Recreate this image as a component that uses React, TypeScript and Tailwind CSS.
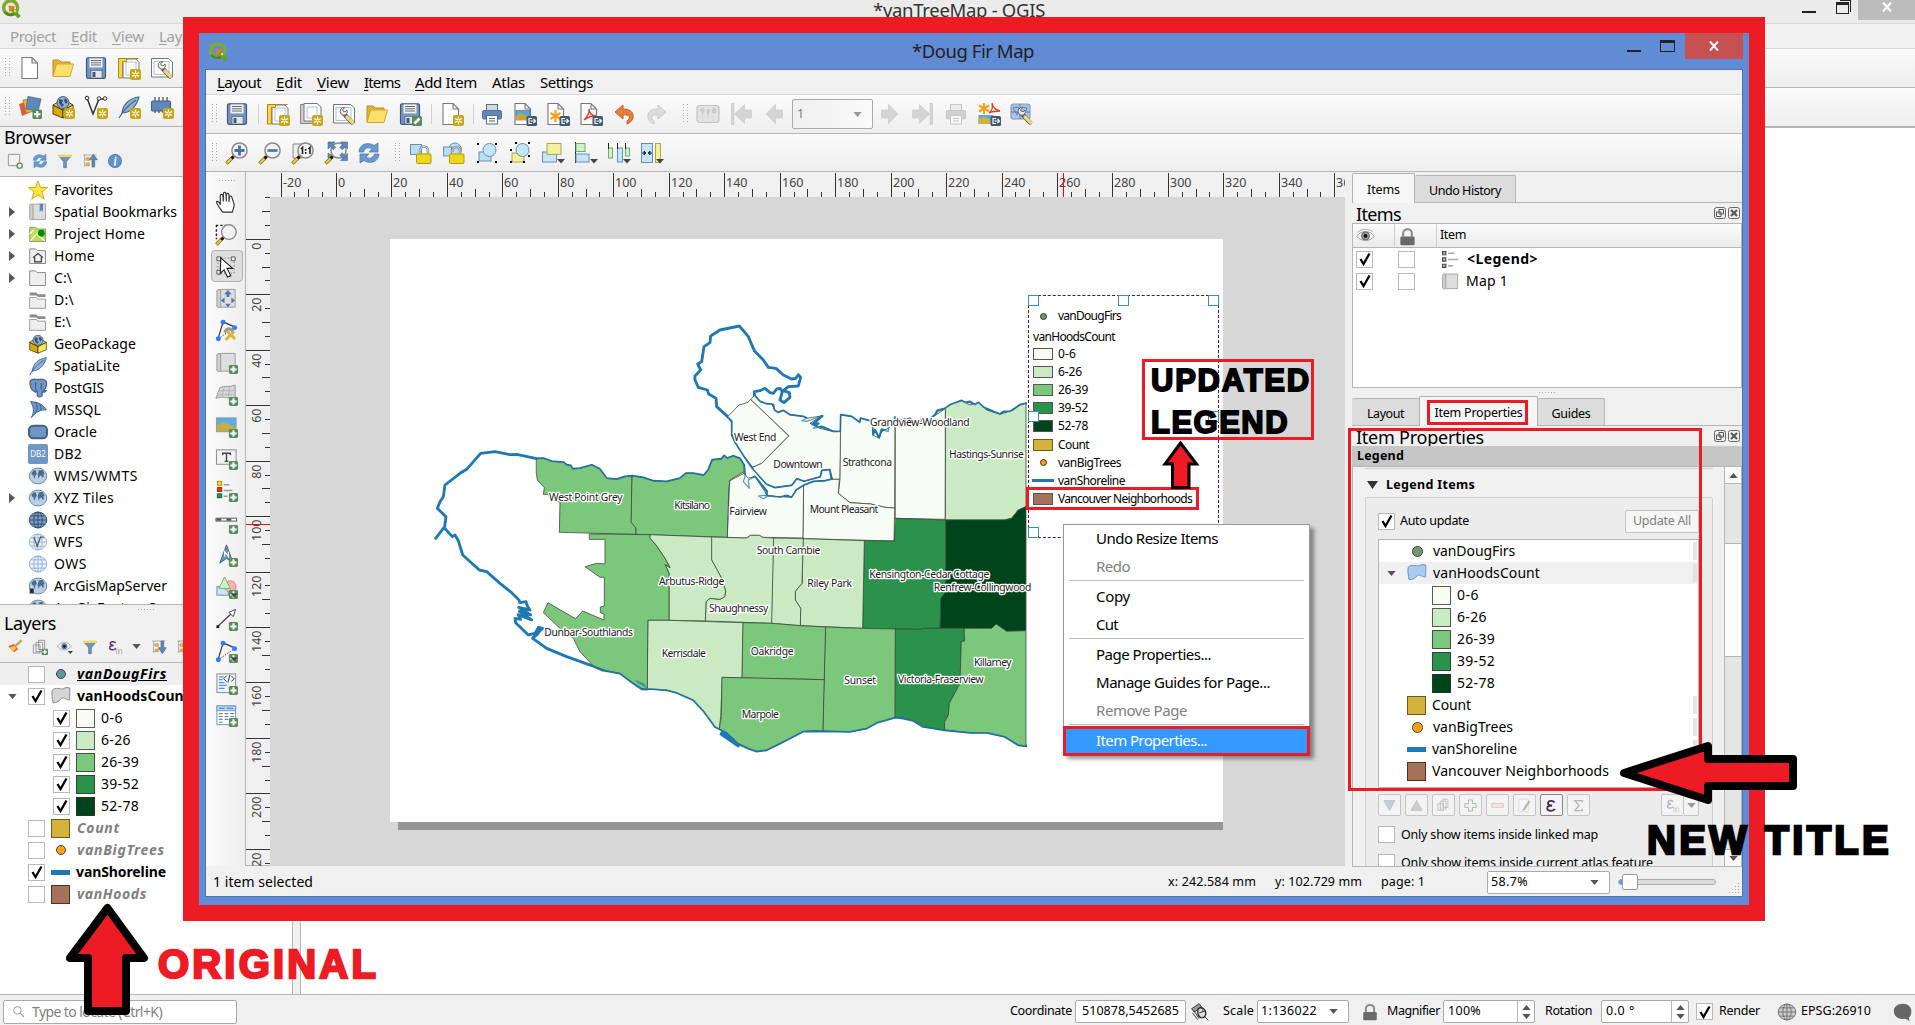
import React, { useLayoutEffect, useRef } from "react";
import type { ReactNode } from "react";

/* Text fitted to a given width by letter spacing */
function T({ w, c = "", children }: { w: number; c?: string; children: ReactNode }) {
  const ref = useRef<HTMLSpanElement>(null);
  useLayoutEffect(() => {
    const el = ref.current;
    if (!el) return;
    el.style.letterSpacing = "0px";
    const natural = el.getBoundingClientRect().width;
    const n = (el.textContent || "").length;
    if (n) el.style.letterSpacing = `${(w - natural) / n}px`;
  }, [w, children]);
  return (
    <span ref={ref} className={"inline-block shrink-0 whitespace-pre " + c}>
      {children}
    </span>
  );
}

/* ---------- badges ---------- */
const Star = () => (
  <g>
    <rect x="13" y="13" width="11" height="11" rx="2" fill="#c8a614" />
    <path d="M18.500 14.500v8M15 16.500l7 4M22 16.500l-7 4" stroke="#fff" strokeWidth="1.300" />
    <circle cx="18.500" cy="18.500" r="1" fill="#c8a614" />
  </g>
);
const Plus = () => (
  <g>
    <rect x="14.500" y="14.500" width="9.500" height="9.500" rx="1.500" fill="#5a8c5a" />
    <path d="M19.250 16v6.500M16 19.250h6.500" stroke="#fff" strokeWidth="2" />
  </g>
);
const Exp = () => (
  <g>
    <rect x="13.500" y="14" width="10.500" height="10" rx="1.500" fill="#415a75" />
    <path d="M19 16.500h-3v5h3M17.500 19h4.500M20.500 17l2 2-2 2" stroke="#fff" strokeWidth="1.200" fill="none" />
  </g>
);
const Page = ({ x = 4 }: { x?: number }) => (
  <path d={`M${x} 1.500h10l5.500 5.500v15.500H${x}zM${x + 10} 1.500v5.500h5.500`} fill="#fff" stroke="#777" strokeWidth="1.100" />
);
const DownTri = () => <path d="M16 18h8l-4 4.500z" fill="#444" />;
const Brush = () => (
  <g>
    <path d="M13 13l7 7.500" stroke="#555" strokeWidth="4.400" strokeLinecap="round" />
    <path d="M15 15l5.500 5.500" stroke="#f0d878" strokeWidth="3.200" strokeLinecap="round" />
    <path d="M8.500 7.500a4 4 0 0 0 5 5.500 4 4 0 0 0 1.500-5l-2 1.800-1.800-.6-.4-1.800 2-1.700a4 4 0 0 0-4.300 1.800z" fill="#ececec" stroke="#666" strokeWidth="1" />
  </g>
);
const Floppy = () => (
  <g>
    <rect x="2.500" y="1.800" width="19" height="20.500" rx="1.500" fill="#6f96c4" stroke="#44597a" strokeWidth="1.200" />
    <rect x="5.500" y="2.400" width="13" height="9" fill="#f4f4f4" />
    <path d="M7 4.500h10M7 6.800h10M7 9h10" stroke="#666" strokeWidth="1" />
    <rect x="7" y="14.500" width="11" height="7.500" fill="#e6e6e6" stroke="#44597a" strokeWidth=".6" />
    <rect x="8.500" y="16" width="3" height="5" fill="#44597a" />
  </g>
);
const Mag = ({ s }: { s?: string }) => (
  <g>
    <path d="M1.500 22.500l6.500-6.500" stroke="#8a6a10" strokeWidth="3.600" />
    <path d="M2 22l5-5" stroke="#f2c84b" strokeWidth="2" />
    <path d="M6.500 17.500l3-3" stroke="#111" strokeWidth="2.600" />
    <circle cx="14.500" cy="9.500" r="7.600" fill="#f1f1f1" fillOpacity=".92" stroke="#8b8b8b" strokeWidth="1.500" />
    {s === "+" && <path d="M14.500 4.500v10M9.500 9.500h10" stroke="#47719f" strokeWidth="2.800" />}
    {s === "-" && <path d="M9.500 9.500h10" stroke="#47719f" strokeWidth="2.600" />}
  </g>
);
const Globe = ({ c = "#5c83ad", f = "#cfe0f2" }: { c?: string; f?: string }) => (
  <g fill="none" stroke={c} strokeWidth="1.200">
    <ellipse cx="12" cy="12" rx="10.500" ry="9.500" fill={f} />
    <ellipse cx="12" cy="12" rx="5" ry="9.500" />
    <path d="M2 12h20M3.500 7h17M3.500 17h17M12 2.500v19" />
  </g>
);
const World = () => (
  <g>
    <ellipse cx="12" cy="12" rx="10.500" ry="9.500" fill="#b9cfe6" stroke="#6b8bb0" strokeWidth="1.200" />
    <path d="M4 8l3-3 3 .5-.5 2 1.500 1.500-2 2-1 4.500-1.500-4-2-1.500zM13 5.500l4-1 3 4.500-1.500 1.500.5 2.500-1.500 1.500-1.500-3-2 .5-1 3.500-1.500-5z" fill="#4b6a8c" />
  </g>
);
const Lock = ({ open }: { open?: boolean }) => (
  <g>
    {open ? <circle cx="13" cy="8.500" r="6.500" fill="#b9dff5" stroke="#6a8eb0" /> : <rect x="1.500" y="3.500" width="11" height="10" fill="#b9dff5" stroke="#6a8eb0" />}
    {open && <rect x="1.500" y="6" width="8" height="9" fill="#b9dff5" stroke="#6a8eb0" />}
    <path d={open ? "M10 11c0-6 8-7 8-1v4" : "M11 14v-4c0-6 8-6 8 0v4"} stroke="#888" strokeWidth="2.600" fill="none" />
    <path d={open ? "M10 11c0-6 8-7 8-1v4" : "M11 14v-4c0-6 8-6 8 0v4"} stroke="#ddd" strokeWidth="1" fill="none" />
    <rect x="7.500" y="13" width="14.500" height="9.500" rx="1" fill="#ecd81e" stroke="#b99b00" />
  </g>
);
const Funnel = () => (
  <g>
    <path d="M2.500 4h19l-7.500 9v9h-4v-9z" fill="#6f96c4" stroke="#4c6c92" />
    <path d="M2.500 2.500h19v3.500h-19z" fill="#f3d94f" />
  </g>
);
const Refresh = () => (
  <g fill="#6b99cf" stroke="#4a7db8" strokeWidth=".8">
    <path d="M2 11C2 4 10 0 17 4.500L21 2v9h-9l3-3C11 5.500 8 7 6.500 11z" />
    <path d="M22 13c0 7-8 11-15 6.500L3 22v-9h9l-3 3c4 2.500 7 1 8.500-3z" />
  </g>
);
const Tree = ({ down }: { down?: boolean }) => (
  <g>
    <path d="M2 3h20M4 3v18M4 9h5M4 18h5" stroke="#888" fill="none" />
    <path d="M7 7h4v4H7zM7 15h4v4H7z" fill="#f9b54c" stroke="#d98a1b" />
    <path d={down ? "M15 3h4v10h4l-6 9-6-9h4z" : "M15 21h4V10h4l-6-8-6 8h4z"} fill="#5e88b8" stroke="#47698f" />
  </g>
);
const Nodes = () => (
  <g>
    <path d="M3 21L8.500 3 21 8.500" stroke="#333" strokeWidth="1.200" fill="none" />
    <path d="M3 21L21 8.500" stroke="#333" strokeDasharray="1.500 1.500" />
    <circle cx="3.500" cy="20.500" r="2.600" fill="#2a7fff" />
    <circle cx="8.500" cy="3.500" r="2.600" fill="#2a7fff" />
    <circle cx="20.500" cy="9" r="2.600" fill="#2a7fff" />
  </g>
);
const Printer = ({ g }: { g?: boolean }) => (
  <g stroke={g ? "#c6c6c6" : "#5a6f88"} strokeWidth="1">
    <rect x="6.500" y="2.500" width="11" height="7" fill={g ? "#ececec" : "#d5d8da"} />
    <rect x="2.500" y="8.500" width="19" height="8.500" rx="1.500" fill={g ? "#d2d2d2" : "#5f88b9"} />
    <rect x="6.500" y="13.500" width="11" height="8.500" fill="#f8f8f8" />
    <path d="M9 16.500h6M9 19h6" />
  </g>
);
const ArrowG = ({ flip, bar }: { flip?: boolean; bar?: boolean }) => (
  <g transform={flip ? "matrix(-1 0 0 1 24 0)" : undefined} fill="#d3d4d5" stroke="#c6c8ca" strokeWidth=".6">
    <path d={bar ? "M1.500 8h7V2.500L18.500 12 8.500 21.500V16h-7z" : "M3.500 8h7V2.500L20 12l-9.500 9.500V16h-7z"} />
    {bar && <rect x="19" y="1.500" width="2.600" height="21" />}
  </g>
);
const Feather = () => (
  <g>
    <path d="M22 2C13 3 6 9 5 18c7 0 14-5 17-16z" fill="#8fb2d6" stroke="#44678f" strokeWidth="1.100" />
    <path d="M2 23C6 16 11 10 19 5" stroke="#44678f" strokeWidth="1.200" fill="none" />
  </g>
);
const Box = () => (
  <g>
    <path d="M2 10l10 5v8L2 19z" fill="#d7ab00" stroke="#222" strokeWidth=".8" />
    <path d="M22 10l-10 5v8l10-4z" fill="#fbe95b" stroke="#222" strokeWidth=".8" />
    <path d="M2 10l5-3h10l5 3-10 5z" fill="#e5c83b" stroke="#222" strokeWidth=".8" />
    <circle cx="12" cy="7.500" r="6" fill="#8fb0d2" stroke="#38516f" strokeWidth=".9" />
    <path d="M8 4l4 1-1 3 2 2-2 2-3-4zM14 3l3 3-2 3-2-3z" fill="#38516f" />
  </g>
);
const Folder = () => (
  <path d="M2 3.500h7l2 2h10V21H2z" fill="#efefef" stroke="#8c8c8c" strokeWidth="1.200" />
);
const MapBook = () => (
  <g>
    <path d="M5.500 2.500h15.500v18.500H5.500z" fill="#dedede" stroke="#999" />
    <path d="M2 4c0-2 4-2 4 0v17c-2 1-4 0-4-1z" fill="#cfcfcf" stroke="#999" />
  </g>
);
const Poly = ({ c = "#d5d5d5", s = "#888" }: { c?: string; s?: string }) => (
  <path d="M1.500 5c4-4 9-1 13-1.500 3-2 5-2 8-1 .5 4-.5 9 0 14-4 1.500-6-4-10-1.500-3 3-6 5.500-10 5C1.500 15 .500 10 1.500 5z" fill={c} stroke={s} strokeWidth="1.200" />
);
const Eps = ({ c = "#5b3a63" }: { c?: string }) => (
  <path d="M13 6c-2-3-8-2.500-8 .8 0 2 2 2.800 5 2.800-4 0-6 1-6 3.500 0 3.800 7 4 9.500.8" fill="none" stroke={c} strokeWidth="2.200" />
);

const ICONS: Record<string, ReactNode> = {
  newfile: <Page x={4} />,
  open: (
    <g>
      <path d="M2 20V4h6l2 2h9v3" fill="#e2b33a" stroke="#b98d1b" />
      <path d="M2 20.500L5.500 8h17L19 20.500z" fill="#fddf6b" stroke="#d2a630" />
    </g>
  ),
  save: <Floppy />,
  newlayout: (
    <g>
      <path d="M6 3h13l3 3.500V22H6z" fill="#fff" stroke="#777" />
      <path d="M9 6h10v13H9z" fill="#fff" stroke="#a8c2e8" />
      <path d="M1.500 2.500h20M1.500 2.500h8v3h-4V22h-4z" fill="#f6d44f" stroke="#a88a1a" strokeWidth="1" />
      <Star />
    </g>
  ),
  duplayout: (
    <g>
      <path d="M1.500 2.500h16v19h-16z" fill="#ccc" stroke="#888" />
      <path d="M5 1.500h13l4 3.500v14H5z" fill="#fff" stroke="#777" />
      <path d="M8 5h10v11H8z" fill="#fff" stroke="#a8c2e8" />
      <Star />
    </g>
  ),
  manager: (
    <g>
      <path d="M1.500 2.500h17l4 3.500v15h-21z" fill="#fff" stroke="#777" />
      <path d="M4 5.500h15v13H4z" fill="#fff" stroke="#a8c2e8" />
      <Brush />
    </g>
  ),
  savetpl: (
    <g>
      <Floppy />
      <rect x="14" y="14" width="10" height="10" rx="1.500" fill="#5a8c5a" />
      <path d="M16.500 21.500l5-5" stroke="#fff" strokeWidth="2.600" />
    </g>
  ),
  addpage: (
    <g>
      <Page x={3} />
      <Star />
    </g>
  ),
  print: <Printer />,
  printg: <Printer g />,
  expimg: (
    <g>
      <Page x={2} />
      <rect x="3" y="8.500" width="14" height="9.500" fill="#4fa6e8" stroke="#666" strokeWidth=".6" />
      <path d="M3 18v-4l5-3 9 4v3z" fill="#c7a638" />
      <Exp />
    </g>
  ),
  expsvg: (
    <g>
      <Page x={2} />
      <path d="M9.500 8v12M4.500 11l10 6M14.500 11L4.500 17" stroke="#f9a01b" strokeWidth="2.200" />
      <Exp />
    </g>
  ),
  exppdf: (
    <g>
      <Page x={2} />
      <path d="M5 18c3-2 6-8 5-11 0 4 3 7 7 7-4-.5-8 1-12 4z" fill="none" stroke="#e33b2e" strokeWidth="1.500" />
      <Exp />
    </g>
  ),
  undo: <path d="M3 10l8-7v4c8 0 11 4 10 9-1 3-3 5-6 6v-3c4-3 3-7-4-6v4z" fill="#e07e3c" stroke="#c26322" />,
  redo: <path d="M21 10l-8-7v4C5 7 2 11 3 16c1 3 3 5 6 6v-3c-4-3-3-7 4-6v4z" fill="#dcdcdc" stroke="#c9c9c9" />,
  atlas: (
    <g>
      <rect x="1" y="3.500" width="22" height="17" rx="3" fill="#e4e4e4" stroke="#c2c2c2" strokeWidth="1.200" />
      <path d="M3.500 7.500l4-1 1.500 1.500-1.500 2-.5 4-1.500-4zM11 7l3 .5-.5 3-1.500 4-1.500-4zM16 7l4-.5.5 3-2 2.500-2.500-1.500z" fill="#c6c6c6" />
      <path d="M1 9h22M1 15h22M7 4v16M12 4v16M17 4v16" fill="none" stroke="#d4d4d4" strokeWidth=".5" />
    </g>
  ),
  first: <ArrowG flip bar />,
  prev: <ArrowG flip />,
  next: <ArrowG />,
  last: <ArrowG bar />,
  expatlas: (
    <g>
      <path d="M7 1v11M2 3.500l10 6M12 3.500l-10 6" stroke="#f9a01b" strokeWidth="2.200" />
      <path d="M12 11c4-3 4-6 3-10 1 5 3 7 8 8-4 0-7 0-11 2z" fill="none" stroke="#e33b2e" strokeWidth="1.300" />
      <rect x="1.500" y="13" width="15" height="9" fill="#5aa7df" />
      <path d="M1.500 22v-5l6-2 9 4v3z" fill="#d2ae3c" />
      <Exp />
    </g>
  ),
  atlasset: (
    <g>
      <rect x="1" y="2" width="19" height="15" rx="2.500" fill="#a9c3e4" stroke="#7d9fc8" strokeWidth="1.200" />
      <path d="M3 6l5-1 1 3-2 5zM12 5l5 1-2 5M1 10h19M10 2v15" stroke="#4b6f9c" strokeWidth=".8" fill="none" />
      <Brush />
    </g>
  ),
  zoomin: <Mag s="+" />,
  zoomout: <Mag s="-" />,
  zoom11: (
    <g>
      <path d="M2 3h9v14H2z" fill="#eee" stroke="#888" />
      <Mag />
      <path d="M10 8l1.500-1.500v6.500M17.500 8l1.500-1.500v6.500M14.700 8v1.800M14.700 11v1.800" stroke="#222" strokeWidth="1.600" fill="none" />
    </g>
  ),
  zoomfull: (
    <g>
      <Mag />
      <path d="M4 1h7L8.700 3.300l3 3-2.400 2.400-3-3L4 8zM23.500 1h-7l2.300 2.300-3 3 2.400 2.400 3-3L23.500 8zM23.500 19.500h-7l2.300-2.300-3-3 2.400-2.400 3 3 2.300-2.300zM4 12v5l3-3z" fill="#5d88b9" stroke="#47698f" strokeWidth=".6" />
    </g>
  ),
  refresh: <Refresh />,
  lock: <Lock />,
  unlock: <Lock open />,
  group: (
    <g>
      <rect x="4" y="11" width="12" height="9" fill="#b9dff5" stroke="#6a8eb0" />
      <circle cx="14.500" cy="9" r="6.500" fill="#c6e6f8" stroke="#6a8eb0" />
      <path d="M2 2h2v2H2zM20 2h2v2h-2zM2 20h2v2H2zM20 20h2v2h-2z" fill="#000" />
    </g>
  ),
  ungroup: (
    <g>
      <rect x="4" y="12" width="12" height="9" fill="#f3ef9c" stroke="#aca64c" />
      <circle cx="14.500" cy="9" r="6.500" fill="#c6e6f8" stroke="#6a8eb0" />
      <path d="M7 1h2v2H7zM20 1h2v2h-2zM2 8h2v2H2zM2 20h2v2H2zM15 20h2v2h-2zM20 14h2v2h-2z" fill="#000" />
    </g>
  ),
  raise: (
    <g>
      <rect x="1.500" y="11" width="14" height="10" fill="#c6e6f8" stroke="#6a8eb0" />
      <rect x="6" y="2.500" width="14" height="11" fill="#f3ef9c" stroke="#aca64c" />
      <DownTri />
    </g>
  ),
  align: (
    <g>
      <path d="M1.500 1v21" stroke="#222" />
      <rect x="2" y="2.500" width="9" height="8" fill="#c9f5c6" stroke="#7aa874" />
      <rect x="2" y="13" width="13" height="8" fill="#c6e6f8" stroke="#6a8eb0" />
      <DownTri />
    </g>
  ),
  distribute: (
    <g>
      <rect x="1.500" y="7" width="4" height="10" fill="#c9f5c6" stroke="#7aa874" />
      <rect x="10.500" y="7" width="5" height="14" fill="#c6e6f8" stroke="#6a8eb0" />
      <rect x="18.500" y="7" width="4" height="8" fill="#c9f5c6" stroke="#7aa874" />
      <path d="M1.500 2v6M10.500 2v6M18.500 2v6" stroke="#222" />
      <DownTri />
    </g>
  ),
  resize: (
    <g>
      <rect x="1.500" y="2.500" width="11" height="19" fill="#c6e6f8" stroke="#6a8eb0" />
      <path d="M2 12h3M12 12H9M4 10l2 2-2 2zM10 10l-2 2 2 2z" fill="#333" stroke="#333" />
      <rect x="15.500" y="2.500" width="5" height="19" fill="#f3ef9c" stroke="#aca64c" />
      <DownTri />
    </g>
  ),
  dsm: (
    <g>
      <path d="M1 9l9-3 3 11-9 4z" fill="#d95f3b" />
      <path d="M5 5l10-2 2 13-9 2z" fill="#e9b23c" stroke="#a8761e" strokeWidth=".7" />
      <path d="M10 1.500L23 4l-3 12-12-2z" fill="#5f88b9" stroke="#44678f" strokeWidth=".8" />
      <Plus />
    </g>
  ),
  geopkg: <Box />,
  newgeopkg: (
    <g>
      <Box />
      <Star />
    </g>
  ),
  newshp: (
    <g>
      <path d="M3 3l6 16 6-15h6" stroke="#333" strokeWidth="1.500" fill="none" />
      <circle cx="3" cy="3" r="1.800" fill="#fff" stroke="#333" />
      <circle cx="15" cy="3.500" r="1.800" fill="#fff" stroke="#333" />
      <circle cx="21" cy="3.500" r="1.800" fill="#fff" stroke="#333" />
      <Star />
    </g>
  ),
  newspatialite: (
    <g>
      <Feather />
      <Star />
    </g>
  ),
  feather: <Feather />,
  memory: (
    <g>
      <path d="M5 2v4M9 2v4M13 2v4M17 2v4M5 14v4M9 14v4M13 14v4" stroke="#222" />
      <rect x="1.500" y="6" width="19" height="10" rx="1" fill="#5f88b9" stroke="#3d5f88" />
      <Star />
    </g>
  ),
  addlayer: (
    <g>
      <path d="M2 2h17v17H2z" fill="#f2f2f2" stroke="#888" strokeWidth="1.300" />
      <circle cx="19" cy="19" r="3.800" fill="#fff" stroke="#5a8c5a" strokeWidth="2" />
    </g>
  ),
  funnel: <Funnel />,
  treeup: <Tree />,
  treedown: <Tree down />,
  info: (
    <g>
      <circle cx="12" cy="12" r="10" fill="#5f93cf" stroke="#3f6ba3" />
      <path d="M13 5.500v2.600M11 10.500h2l-1.500 7h2" stroke="#fff" strokeWidth="2.300" fill="none" />
    </g>
  ),
  star: <path d="M12 1l3 8h8.500l-6.700 5.300L19.500 23 12 18l-7.500 5 2.700-8.700L.5 9H9z" fill="#fbe63c" stroke="#cda41e" strokeWidth="1.100" />,
  bookmark: (
    <g>
      <MapBook />
      <path d="M14 2h4v10l-2-2-2 2z" fill="#5f88b9" />
    </g>
  ),
  projhome: (
    <g>
      <path d="M2 4h7l2 2h10v15H2z" fill="#b6e04c" stroke="#888" />
      <path d="M2 12l5-5M3 20l7-8 10 8" stroke="#fff" strokeWidth="1.500" fill="none" />
      <circle cx="16" cy="11" r="4" fill="#008a00" />
    </g>
  ),
  home: (
    <g>
      <Folder />
      <path d="M6 14l6-5 6 5M8 13.500v5.500h8v-5.500" stroke="#333" strokeWidth="1.400" fill="none" />
    </g>
  ),
  folder: <Folder />,
  drive: (
    <g>
      <path d="M2 9h8l2 2h9v11H2z" fill="#efefef" stroke="#8c8c8c" />
      <path d="M2 3h8l2 2h9v3.500h-9l-2-2H2z" fill="#8c8c8c" />
    </g>
  ),
  postgis: (
    <path d="M3 3c5-3 8-1 9-1 3-1 8-1 10 2 1 5-1 9-3 11h3c-1 2-4 3-5 1v5c-2 3-6 2-6-1v-4c-3 2-3 0-3 0-4-1-7-8-5-13zM9 5c1 4-1 7 1 10M16 6v8" fill="#6f96c4" stroke="#3f6187" strokeWidth="1.400" />
  ),
  mssql: <path d="M3 2c9 0 16 4 19 10-6-1-12 2-18 9 4-7 3-13-1-19zM9 3c3 5 2 9 0 12M14 5c2 3 2 5 1 7" fill="#6f96c4" stroke="#3f6187" strokeWidth="1.200" />,
  oracle: <rect x="1.200" y="4.500" width="21.600" height="15" rx="5" fill="#6f96c4" stroke="#3f5f85" strokeWidth="2.400" />,
  world: <World />,
  wcs: <Globe c="#33506f" f="#7c9fc6" />,
  wfs: (
    <g>
      <Globe c="#9db9d8" f="#edf3fa" />
      <path d="M7 6l4 11 4-11h4" stroke="#555" strokeWidth="1.500" fill="none" />
    </g>
  ),
  ows: <Globe c="#8fb2da" f="#eef5fc" />,
  arcgis: (
    <g>
      <World />
      <path d="M2 15h5v6H2z" fill="#333" />
    </g>
  ),
  style: (
    <g>
      <path d="M22 2l-9 8" stroke="#caa04a" strokeWidth="3.500" />
      <path d="M2 11l8-4 7 8-6 5z" fill="#e7653a" />
      <path d="M4 13l7-3 3 4-6 5z" fill="#f7c948" />
    </g>
  ),
  addgroup: (
    <g>
      <path d="M2 9h10v12H2zM6 5h10v14H6zM10 2h9v14h-9z" fill="#f0f0f0" stroke="#777" />
      <Plus />
    </g>
  ),
  eye: (
    <g>
      <path d="M1 11c5-8 15-8 20 0-5 7-15 7-20 0z" fill="#f4f4f4" stroke="#888" />
      <circle cx="11" cy="11" r="4.500" fill="#5e7f9f" />
      <circle cx="11" cy="11" r="2" fill="#111" />
      <DownTri />
    </g>
  ),
  eyeh: (
    <g>
      <path d="M1 13c5-8 17-8 22 0-5 7-17 7-22 0z" fill="#f4f4f4" stroke="#888" />
      <path d="M2 8c5-5 13-5 19-1" fill="none" stroke="#999" />
      <circle cx="12" cy="12.500" r="5" fill="#999" stroke="#555" />
      <circle cx="12" cy="12.500" r="2.400" fill="#111" />
    </g>
  ),
  eps: (
    <g>
      <Eps />
      <path d="M14 23v-7h3v7M18 23v-7h4v7" stroke="#aaa" fill="none" />
    </g>
  ),
  epsg: (
    <g opacity=".35">
      <Eps />
      <path d="M14 23v-7h3v7M18 23v-7h4v7" stroke="#777" fill="none" />
    </g>
  ),
  epsb: (
    <g transform="translate(0 -.5) scale(1.300)">
      <Eps c="#4b2a55" />
    </g>
  ),
  polyg: <Poly />,
  polyb: <Poly c="#a9cbee" s="#6d93ba" />,
  hand: (
    <path d="M8 22c-2-3-6-7-6.500-11 1.500-1 3 1 4 3.500V5c0-2 2.500-2 2.700 0l.5 6V3c0-2 2.600-2 2.800 0l.3 8V4c.3-2 2.700-2 2.800 0v7.500l.4-5c.3-2 2.600-1.500 2.600.3L20 14c0 3-1 5-2 8z" fill="#fff" stroke="#333" strokeWidth="1.200" />
  ),
  zoombox: (
    <g>
      <path d="M1 2.500h11M1.500 2v15" stroke="#222" strokeWidth="1.500" strokeDasharray="2.500 2" />
      <Mag />
    </g>
  ),
  select: (
    <g>
      <rect x="3" y="3" width="17" height="16" fill="none" stroke="#777" strokeDasharray="1.500 2" />
      <path d="M2 2h4v4H2zM17 2h4v4h-4zM2 16h4v4H2z" fill="#eee" stroke="#555" />
      <path d="M6 3l12.500 11h-6l4 7.500-3.500 1.500-3.500-7.500-4 3.500z" fill="#fff" stroke="#222" strokeWidth="1.200" />
    </g>
  ),
  move: (
    <g>
      <MapBook />
      <path d="M13.500 3l4 4.500h-2.500v3h-3v-3H9.500zM6 14l4-3v6zM21 14l-4-3v6zM13.500 21l-3-3.500h6z" fill="#5077a5" />
    </g>
  ),
  editnodes: (
    <g>
      <Nodes />
      <path d="M12 12l9 9M20 13l-9 9" stroke="#e2b33a" strokeWidth="3" />
      <path d="M10 14c2-5 6-5 9-1" stroke="#999" strokeWidth="3" fill="none" />
    </g>
  ),
  addmap: (
    <g>
      <MapBook />
      <Plus />
    </g>
  ),
  add3d: (
    <g>
      <path d="M5 5c5-3 10 0 16-3v13c-6 2-12-2-20 1z" fill="#d8d8d8" stroke="#999" />
      <path d="M4 9c6-3 11 1 17-2M3 13c6-3 12 1 18-2M10 3L7 15M15 4l-1 12" fill="none" stroke="#aaa" strokeWidth=".8" />
      <Plus />
    </g>
  ),
  addpic: (
    <g>
      <rect x="1.500" y="3" width="20.500" height="14.500" fill="#5ab0ee" stroke="#999" />
      <path d="M2 17v-6l7-4 13 6v4z" fill="#c9ab43" />
      <Plus />
    </g>
  ),
  addlabel: (
    <g>
      <rect x="1.500" y="3" width="20.500" height="15" fill="#f2f2f2" stroke="#888" />
      <path d="M8 8.500V6.500h8v2M12 6.500v8M10 15h4" stroke="#444" strokeWidth="1.400" fill="none" />
      <Plus />
    </g>
  ),
  addlegend: (
    <g>
      <path d="M9 6h6M9 12h9M9 18h4" stroke="#999" strokeWidth="1.500" />
      <rect x="2.500" y="2.500" width="4.500" height="4" fill="#ffd21e" stroke="#c48b00" />
      <rect x="2.500" y="9" width="4.500" height="4" fill="#f23c0c" stroke="#a32400" />
      <rect x="2.500" y="15.500" width="4.500" height="4" fill="#13a05a" stroke="#06683a" />
      <Plus />
    </g>
  ),
  addscale: (
    <g>
      <rect x="1" y="7.500" width="21.500" height="3" fill="#fff" stroke="#555" />
      <path d="M1.500 9h5M12 9h5" stroke="#555" strokeWidth="2.500" />
      <Plus />
    </g>
  ),
  north: (
    <g>
      <path d="M12 1l7 19-7-5-7 5z" fill="#6f96c4" stroke="#44597a" />
      <path d="M10 13V8l4 5V8" stroke="#fff" strokeWidth="1.200" fill="none" />
      <Plus />
    </g>
  ),
  addshape: (
    <g>
      <rect x="2" y="11" width="12" height="9" fill="#c6e6f8" stroke="#6a8eb0" />
      <circle cx="16" cy="11" r="6" fill="#f6b3b3" stroke="#cf8585" />
      <path d="M10 1l6 12H4z" fill="#c9f5c6" stroke="#7aa874" />
      <Plus />
      <DownTri />
    </g>
  ),
  addarrow: (
    <g>
      <path d="M3 19L18 5" stroke="#444" strokeWidth="1.300" />
      <path d="M21.500 1.500l-7 3 4.500 4.500z" fill="#fff" stroke="#444" />
      <path d="M1.500 18h3v3h-3z" fill="#222" />
      <Plus />
    </g>
  ),
  addnode: (
    <g>
      <Nodes />
      <Plus />
      <DownTri />
    </g>
  ),
  addhtml: (
    <g>
      <rect x="2" y="2" width="19.500" height="19.500" fill="#eef3f8" stroke="#888" />
      <path d="M4 5h5M4 8h4M4 11h6M4 14h8M4 17h6" stroke="#5f93cf" strokeWidth="1.300" />
      <path d="M12 4l-3 3 3 3M17 4l3 3-3 3M15.500 3l-2 8" stroke="#333" fill="none" />
      <Plus />
    </g>
  ),
  addtable: (
    <g>
      <rect x="2" y="2" width="19.500" height="19.500" fill="#fff" stroke="#6f96c4" />
      <path d="M2 2h19.500v5H2z" fill="#bcdcf2" stroke="#6f96c4" />
      <path d="M4 4.500h6M12 4.500h7M4 10h4M10 10h4M16 10h4M4 13h4M10 13h4M16 13h4M4 16h4M10 16h4M4 19h4" stroke="#5f88b9" strokeWidth="1.200" />
      <Plus />
    </g>
  ),
  lockg: (
    <g>
      <path d="M6.500 12V8c0-7 11-7 11 0v4" stroke="#8a8a8a" strokeWidth="2.600" fill="none" />
      <rect x="3" y="12" width="18" height="11" rx="1.500" fill="#6a6a6a" />
    </g>
  ),
  legendicon: (
    <g>
      <path d="M9 4h8M9 12h13M9 20h6" stroke="#aaa" strokeWidth="2" />
      <path d="M2 2h4v4H2zM2 10h4v4H2zM2 18h4v4H2z" fill="#ccc" stroke="#444" strokeWidth="1.500" />
    </g>
  ),
  mapbook: <MapBook />,
  mouse: (
    <g>
      <path d="M2 8l9-6 3 4-9 6z" fill="#999" stroke="#222" />
      <path d="M10 8c4-3 9 1 9 5s-2 6-5 6-6-5-4-11z" fill="#ddd" stroke="#222" strokeWidth="1.500" />
      <path d="M3 13l6 8M5 11l6 9M11 13l7-2M15 9l1 3M18 18l4 4" stroke="#222" />
    </g>
  ),
  crs: <Globe c="#777" f="#ccc" />,
  bubble: <path d="M12 2c6 0 10 4 10 9s-2 7-3 8l1 4-5-3c-8 2-14-3-14-9 0-5 4-9 11-9z" fill="#666" />,
  search: (
    <g>
      <circle cx="10" cy="10" r="7" fill="none" stroke="#999" strokeWidth="1.800" />
      <path d="M15 15l7 7" stroke="#999" strokeWidth="2" />
    </g>
  ),
  bdown: <path d="M3 4h18l-9 16z" fill="#c5cdd6" stroke="#b2b8bf" />,
  bup: <path d="M3 20h18L12 4z" fill="#cdcdcd" stroke="#b5b5b5" />,
  bgroup: <path d="M3 9h9v11H3zM7 5h9v13H7zM11 2h8v13h-8z" fill="#f0f0f0" stroke="#bbb" strokeWidth="1.300" />,
  bplus: <path d="M9 3h6v6h6v6h-6v6H9v-6H3V9h6z" fill="#f4f4f4" stroke="#a8b5a8" strokeWidth="1.500" />,
  bminus: <path d="M3 9h18v6H3z" fill="#f6e9ea" stroke="#d8bcbc" strokeWidth="1.300" />,
  bedit: (
    <g>
      <path d="M3 2h15v20H3z" fill="#f8f8f8" stroke="#ccc" />
      <path d="M20 5L10 20" stroke="#b8b8ae" strokeWidth="3.500" />
    </g>
  ),
  bsum: <path d="M18 7V4H6l7 8-7 8h12v-3" fill="none" stroke="#b5b5b5" strokeWidth="2" />,
  qgis: (
    <g>
      <circle cx="11" cy="11" r="8" fill="none" stroke="#7cab2d" strokeWidth="4" />
      <path d="M4 16a8.500 8.500 0 0 0 11 2" fill="none" stroke="#4f8a1f" strokeWidth="3" />
      <path d="M12 12l9 10" stroke="#64a02b" strokeWidth="4.500" />
      <path d="M10 10l4 .5-3.500 3.500z" fill="#ef7b1c" stroke="#ef7b1c" strokeWidth="2.500" />
      <path d="M15 14l2 2" stroke="#f7e03c" strokeWidth="2.500" />
    </g>
  ),
};

function I({ n, c = "size-6" }: { n: string; c?: string }) {
  return (
    <svg viewBox="0 0 24 24" className={"block shrink-0 " + c}>
      {ICONS[n]}
    </svg>
  );
}

/* ---------- small controls ---------- */
const Grip = () => (
  <div className="grid h-[20px] w-[5px] shrink-0 grid-cols-2 gap-x-[2px]">
    {Array.from({ length: 14 }, (_, i) => (
      <div key={i} className="size-px bg-[#aaa]" />
    ))}
  </div>
);
const HGrip = () => (
  <div className="flex gap-[2px]">
    {Array.from({ length: 6 }, (_, i) => (
      <div key={i} className="size-px bg-[#aaa]" />
    ))}
  </div>
);
const Sep = () => <div className="-mr-px h-[20px] w-px shrink-0 bg-[#d0d0d0]" />;
function Check({ on }: { on?: boolean }) {
  return (
    <div className="flex size-[17px] shrink-0 items-center justify-center border border-[#b8b8b8] bg-white">
      {on && (
        <svg viewBox="0 0 12 14" className="h-[14px] w-[12px]">
          <path d="M1.500 7l3 5L10.500 1.500" fill="none" stroke="#000" strokeWidth="2.300" />
        </svg>
      )}
    </div>
  );
}
const Down = ({ c = "text-[#555]" }: { c?: string }) => (
  <svg viewBox="0 0 10 6" className={"h-[5px] w-[9px] shrink-0 " + c}>
    <path d="M0 0h10L5 6z" fill="currentColor" />
  </svg>
);
const Up = () => (
  <svg viewBox="0 0 10 6" className="h-[5px] w-[9px] shrink-0 text-[#555]">
    <path d="M0 6h10L5 0z" fill="currentColor" />
  </svg>
);
const Right = () => (
  <svg viewBox="0 0 6 10" className="h-[10px] w-[6px] shrink-0">
    <path d="M0 0v10L6 5z" fill="#555" />
  </svg>
);
const WX = () => (
  <svg viewBox="0 0 10 10" className="size-[10px]">
    <path d="M1 .5l8 9M9 .5l-8 9" stroke="#fff" strokeWidth="2" />
  </svg>
);
const Menu = ({ w, t }: { w: number; t: string }) => (
  <T w={w}>
    <span className="underline underline-offset-2">{t[0]}</span>
    {t.slice(1)}
  </T>
);
const SWATCHES: [string, string, number, number][] = [
  ["0-6", "bg-[#f7fcf5]", 22, 18],
  ["6-26", "bg-[#c9eac3]", 30, 24],
  ["26-39", "bg-[#7bc77c]", 38, 30],
  ["39-52", "bg-[#2a924a]", 38, 30],
  ["52-78", "bg-[#00441b]", 38, 30],
];
const BAR = "flex shrink-0 items-center bg-linear-to-b from-[#fbfbfb] to-[#eeeeee] border-b border-[#b5b5b5]";

/* ---------- main window left docks ---------- */
const TREE: [string, string, number, boolean][] = [
  ["star", "Favorites", 59, false],
  ["bookmark", "Spatial Bookmarks", 123, true],
  ["projhome", "Project Home", 91, true],
  ["home", "Home", 41, true],
  ["folder", "C:\\", 18, true],
  ["drive", "D:\\", 20, false],
  ["drive", "E:\\", 17, false],
  ["geopkg", "GeoPackage", 82, false],
  ["feather", "SpatiaLite", 66, false],
  ["postgis", "PostGIS", 50, false],
  ["mssql", "MSSQL", 47, false],
  ["oracle", "Oracle", 43, false],
  ["db2", "DB2", 28, false],
  ["world", "WMS/WMTS", 84, false],
  ["world", "XYZ Tiles", 60, true],
  ["wcs", "WCS", 31, false],
  ["wfs", "WFS", 29, false],
  ["ows", "OWS", 33, false],
  ["arcgis", "ArcGisMapServer", 113, false],
  ["world", "ArcGisFeatureServer", 138, false],
];

function LeftDock() {
  return (
    <div className="flex w-[293px] shrink-0 flex-col border-r border-[#b5b5b5]">
      <div className="flex h-[21px] shrink-0 items-center pb-[2px] pl-1 text-[18px] leading-none">
        <T w={67}>Browser</T>
      </div>
      <div className="flex h-[29px] shrink-0 items-center gap-[9px] border-b border-[#b5b5b5] pb-[2px] pl-[7px]">
        {["addlayer", "refresh", "funnel", "treeup", "info"].map((n) => (
          <I key={n} n={n} c="size-4" />
        ))}
      </div>
      <div className="h-[428px] shrink-0 overflow-hidden border-b border-[#b5b5b5] bg-white pt-[2px]">
        {TREE.map(([ic, t, w, ar], i) => (
          <div key={i} className="flex h-[22px] items-center">
            <div className="flex w-[27px] shrink-0 justify-center pr-[3px]">{ar && <Right />}</div>
            {ic === "db2" ? (
              <div className="ml-px flex size-[20px] items-center justify-center rounded-xs bg-[#6f96c4] text-[8px] text-white">DB2</div>
            ) : (
              <I n={ic} c="size-5 ml-px" />
            )}
            <T w={w} c="ml-[6px]">
              {t}
            </T>
          </div>
        ))}
      </div>
      <div className="flex h-[8px] shrink-0 items-center justify-center">
        <HGrip />
      </div>
      <div className="flex h-[20px] shrink-0 items-center pb-px pl-1 text-[18px] leading-none">
        <T w={52}>Layers</T>
      </div>
      <div className="flex h-[30px] shrink-0 items-center gap-[9px] border-b border-[#b5b5b5] pb-[2px] pl-[7px]">
        {["style", "addgroup", "eye", "funnel", "eps"].map((n) => (
          <I key={n} n={n} c="size-4" />
        ))}
        <Down />
        <I n="treedown" c="size-4 ml-px" />
        <I n="treeup" c="size-4" />
      </div>
      <div className="flex-1 overflow-hidden bg-white">
        <div className="flex h-[22px] items-center bg-[#efefef] pl-[28px]">
          <Check />
          <div className="ml-[11px] size-[10px] rounded-full border border-[#444] bg-[#5b9a9a]" />
          <T w={90} c="ml-[11px] font-bold italic underline">
            vanDougFirs
          </T>
        </div>
        <div className="flex h-[22px] items-center pl-[8px]">
          <Down />
          <div className="w-[11px]" />
          <Check on />
          <I n="polyg" c="size-5 ml-[6px]" />
          <T w={113} c="ml-[6px] font-bold">
            vanHoodsCount
          </T>
        </div>
        {SWATCHES.map(([t, bg, w]) => (
          <div key={t} className="flex h-[22px] items-center pl-[53px]">
            <Check on />
            <div className={"ml-[6px] size-[19px] border border-[#333]/80 " + bg} />
            <T w={w} c="ml-[6px]">
              {t}
            </T>
          </div>
        ))}
        <div className="flex h-[22px] items-center pl-[28px]">
          <Check />
          <div className="ml-[6px] size-[19px] border border-[#6b5a1e] bg-[#d3b33b]" />
          <T w={43} c="ml-[7px] font-bold italic text-[#808080]">
            Count
          </T>
        </div>
        <div className="flex h-[22px] items-center pl-[28px]">
          <Check />
          <div className="ml-[11px] size-[10px] rounded-full border border-[#444] bg-[#ff9e17]" />
          <T w={88} c="ml-[11px] font-bold italic text-[#808080]">
            vanBigTrees
          </T>
        </div>
        <div className="flex h-[22px] items-center pl-[28px]">
          <Check on />
          <div className="ml-[6px] h-[5px] w-[19px] bg-[#1f78b4]" />
          <T w={90} c="ml-[6px] font-bold">
            vanShoreline
          </T>
        </div>
        <div className="flex h-[22px] items-center pl-[28px]">
          <Check />
          <div className="ml-[6px] size-[19px] border border-[#4d3326] bg-[#a57259]" />
          <T w={70} c="ml-[7px] font-bold italic text-[#808080]">
            vanHoods
          </T>
        </div>
      </div>
    </div>
  );
}

const Spin = ({ t, w, c }: { t: string; w: number; c: string }) => (
  <div className={"flex h-[23px] shrink-0 items-center rounded-xs border border-[#aaa] bg-white " + c}>
    <T w={w} c="ml-[4px]">
      {t}
    </T>
    <div className="ml-auto flex h-full w-[17px] flex-col items-center justify-center gap-[4px] border-l border-[#b5b5b5]">
      <Up />
      <Down />
    </div>
  </div>
);

function MainWindow() {
  return (
    <div className="flex h-[1025px] w-[1915px] flex-col text-[14px] leading-none">
      <div className="flex h-[24px] shrink-0 items-start border-b border-[#d8d8d8] bg-[#ebebeb]">
        <I n="qgis" c="size-[21px] -mt-[2px] ml-[1px]" />
        <T w={172} c="mt-px ml-[851px] text-[18.500px] text-[#333]">
          *vanTreeMap - QGIS
        </T>
        <div className="ml-auto flex">
          <div className="mt-[11px] h-[2px] w-[14px] bg-[#222]" />
          <div className="relative mr-[9px] ml-[20px] mt-[2px] h-[12px] w-[13px] border border-t-3 border-[#222]">
            <div className="absolute -right-[3px] -top-[5px] h-[12px] w-[11px] border-t border-r border-[#222]" />
          </div>
          <div className="flex h-[20px] w-[57px] items-start justify-center bg-[#bcbcbc] pt-[2px]">
            <WX />
          </div>
        </div>
      </div>
      <div className="flex h-[25px] shrink-0 items-center gap-[15px] border-b border-[#d7d7d7] pl-[10px] text-[15px] text-[#a0a0a0]">
        <T w={46}>
          Pro<span className="underline underline-offset-2">j</span>ect
        </T>
        <Menu w={26} t="Edit" />
        <Menu w={32} t="View" />
        <Menu w={37} t="Layer" />
      </div>
      <div className={BAR + " h-[39px] gap-[9px] pl-[5px]"}>
        <Grip />
        <div className="-ml-px" />
        {["newfile", "open", "save", "newlayout", "manager"].map((n, i) => (
          <I key={i} n={n} c={i === 0 ? "size-6 -ml-[9px]" : "size-6"} />
        ))}
      </div>
      <div className={BAR + " h-[39px] gap-[9px] pl-[5px]"}>
        <Grip />
        <div className="-ml-px" />
        {["dsm", "newgeopkg", "newshp", "newspatialite", "memory"].map((n, i) => (
          <I key={i} n={n} c={i === 0 ? "size-6 -ml-[9px]" : "size-6"} />
        ))}
      </div>
      <div className="flex min-h-0 flex-1 border-b border-[#b5b5b5]">
        <LeftDock />
        <div className="w-[7px] shrink-0" />
        <div className="flex-1 border-t border-l border-[#b5b5b5] bg-white" />
      </div>
      <div className="flex h-[30px] shrink-0 items-center pl-[3px] pt-[3px] text-[12.500px]">
        <div className="flex h-[24px] w-[234px] items-center rounded-xs border border-[#aaa] bg-white pl-[8px] text-[14px] text-[#808080]">
          <I n="search" c="size-[13px]" />
          <T w={130} c="ml-[7px]">
            Type to locate (Ctrl+K)
          </T>
        </div>
        <T w={62} c="ml-[773px]">
          Coordinate
        </T>
        <div className="ml-[3px] flex h-[23px] w-[111px] items-center rounded-xs border border-[#aaa] bg-white pl-[6px]">
          <T w={97}>510878,5452685</T>
        </div>
        <I n="mouse" c="size-[20px] ml-[4px]" />
        <T w={31} c="ml-[13px]">
          Scale
        </T>
        <div className="ml-[3px] flex h-[23px] w-[92px] items-center justify-between rounded-xs border border-[#aaa] bg-white pr-[10px] pl-[3px]">
          <T w={56}>1:136022</T>
          <Down />
        </div>
        <I n="lockg" c="size-[18px] ml-[12px]" />
        <T w={53} c="ml-[8px]">
          Magnifier
        </T>
        <Spin t="100%" w={33} c="ml-[3px] w-[92px]" />
        <T w={47} c="ml-[10px]">
          Rotation
        </T>
        <Spin t="0.0 °" w={29} c="ml-[9px] w-[88px]" />
        <div className="w-[7px]" />
        <Check on />
        <T w={41} c="ml-[6px]">
          Render
        </T>
        <I n="crs" c="size-[20px] ml-[17px]" />
        <T w={70} c="ml-[4px]">
          EPSG:26910
        </T>
        <I n="bubble" c="size-[20px] ml-[22px]" />
      </div>
    </div>
  );
}

/* ---------- map ---------- */
const W = "#f7fcf5";
const L = "#c9eac3";
const M = "#7bc77c";
const D = "#2a924a";
const X = "#00441b";
const HOODS: [string, string][] = [
  [M, "350,476 370,475 395,484 430,487 440,495 452,497 458,507 480,505 515,495 540,508 560,535 590,538 615,530 637,528 634,668 648,684 648,703 418,697 420,606 390,598 386,583 370,583 373,563 352,540 349,520"],
  [M, "637,528 670,533 700,543 740,545 780,535 798,520 820,520 852,526 865,510 877,480 905,477 912,467 922,475 940,468 960,476 972,495 972,515 930,540 926,570 923,712 648,703 648,684 634,668"],
  [W, "930,542 972,520 985,535 1005,530 1035,575 1040,588 1080,590 1115,592 1130,570 1152,556 1150,714 1028,712 1018,706 992,706 980,714 923,712"],
  [W, "923,350 957,315 982,308 993,298 1106,408 1025,490 998,502 970,465 945,425 935,400 936,362"],
  [W, "993,298 1003,286 1020,305 1040,312 1055,312 1065,332 1075,338 1090,332 1110,345 1150,350 1160,355 1205,348 1170,370 1200,385 1240,395 1263,395 1260,538 1238,538 1230,508 1205,510 1200,530 1152,543 1130,535 1115,555 1065,562 1040,552 1000,510 998,502 1025,490 1106,408"],
  [W, "1263,345 1295,350 1320,368 1322,355 1357,365 1358,405 1378,415 1385,395 1405,385 1425,370 1424,624 1395,622 1352,612 1290,608 1255,580 1260,538"],
  [W, "1427,360 1460,356 1490,380 1540,350 1577,325 1576,658 1427,655"],
  [L, "1577,322 1600,310 1625,302 1650,315 1675,308 1700,330 1740,343 1780,330 1800,315 1818,310 1818,620 1795,630 1775,655 1755,660 1577,660"],
  [W, "1152,556 1180,545 1215,543 1235,538 1258,538 1255,580 1290,608 1352,612 1395,622 1424,624 1422,723 1150,716"],
  [X, "1577,660 1755,660 1775,655 1795,630 1818,620 1818,992 1760,994 1728,972 1715,985 1560,985 1562,895 1577,875"],
  [D, "1427,655 1577,660 1577,875 1562,895 1560,985 1510,985 1500,988 1328,985 1333,722 1422,723"],
  [L, "1150,716 1333,722 1328,985 1141,977 1142,925 1126,900 1126,874 1146,850"],
  [L, "1061,714 1150,716 1146,850 1126,874 1126,900 1142,925 1141,977 1055,970"],
  [L, "875,711 980,714 992,706 1018,706 1028,712 1061,714 1055,970 856,963 858,905 870,895 900,898 914,890 917,873 905,835 875,780"],
  [L, "690,704 875,711 875,780 905,835 917,873 914,890 900,898 870,895 858,905 856,963 747,961 747,820 735,793 750,803 735,775 708,735 690,715"],
  [M, "509,702 690,704 690,715 708,735 735,775 750,803 735,793 747,820 747,961 685,961 683,1168 665,1165 640,1150 600,1120 560,1112 520,1098 480,1055 460,1015 420,985 370,938 384,908 466,956 488,933 552,960 552,942 541,938 541,921 553,918 553,832 540,832 495,800 530,790 555,792 555,718 509,718"],
  [L, "685,961 747,961 970,968 967,1134 907,1132 902,1250 898,1287 885,1280 850,1232 820,1200 770,1178 740,1170 683,1168"],
  [M, "970,968 1055,970 1141,977 1218,981 1214,1139 967,1134"],
  [M, "907,1132 1214,1139 1210,1293 1180,1292 1150,1294 1090,1325 1040,1350 1010,1354 985,1345 955,1330 920,1298 898,1287 904,1250"],
  [M, "1218,981 1328,985 1427,987 1426,1252 1370,1268 1340,1285 1290,1295 1210,1293"],
  [D, "1427,987 1500,988 1510,985 1633,985 1633,1023 1624,1025 1620,1150 1588,1210 1585,1245 1574,1265 1574,1290 1510,1280 1480,1262 1450,1255 1426,1252"],
  [M, "1633,985 1715,985 1728,972 1760,994 1818,992 1818,1338 1795,1335 1755,1310 1700,1298 1650,1298 1574,1290 1574,1265 1585,1245 1588,1210 1620,1150 1624,1025 1633,1023"],
];
const SHORE_THICK = [
  "1003,288 1003,275 1020,272 1035,265 1050,278 1060,280 1070,267 1080,265 1087,275 1080,300 1092,308 1110,292 1108,278 1090,272 1105,260 1135,258 1142,232 1135,224 1128,235 1115,237 1090,225 1068,205 1045,202 1030,180 1003,152 985,110 970,92 958,78 900,90 872,108 870,128 852,140 845,185 833,192 842,210 825,228 825,240 835,262 862,270 866,282 888,295 890,320 923,350",
  "350,476 290,463 270,464 225,455 182,460 140,508 120,520 75,555 70,590 60,605 52,625 78,650 74,680 47,715",
  "74,685 97,710 105,705 115,722 128,765 178,810 200,815 240,850 275,878 297,900 300,908 318,905 322,918 330,930 296,922 332,945 298,934 335,960 294,944 302,958 285,955 287,968 325,1005 345,1000 355,982 368,985 352,1000 338,1015 380,1045 440,1070 515,1097",
  "345,1000 362,985 352,1004 340,1012",
  "903,1302 955,1338 935,1310 905,1298 950,1332",
];
const SHORE_THIN = [
  "350,476 370,475 395,484 430,487 440,495 452,497 458,507 480,505 515,495 540,508 560,535 590,538 615,530 637,528 670,533 700,543 740,545 780,535 798,520 820,520 852,526 865,510 877,480 905,477 912,467 922,475 940,468 960,476 972,495 975,530 970,545 988,565 985,540 1005,530 1040,573 1040,590 1030,596 1015,588 1030,586 1080,592 1100,587 1115,593 1130,570 1152,556 1180,545 1215,543 1235,538 1230,508 1205,510 1200,530 1152,543 1130,535 1115,555 1065,562 1040,552 998,505 970,465 945,425 936,405 936,365 923,350",
  "1003,286 1020,305 1040,312 1060,314 1062,330 1075,338 1090,332 1110,345 1150,350 1160,355 1145,362 1160,364 1207,348 1175,375 1195,370 1180,385 1205,380 1240,395 1262,394 1263,345 1295,350 1320,368 1322,355 1357,365 1358,405 1365,390 1378,415 1385,388 1405,395 1407,375 1425,372 1425,352 1435,365 1470,356 1490,375 1500,360 1520,365 1545,345 1552,332 1577,325 1590,315 1625,302 1635,308 1650,305 1665,315 1675,308 1690,322 1720,335 1740,343 1750,335 1770,335 1800,315 1818,310",
  "515,1097 545,1110 600,1120 640,1150 665,1167 683,1168 670,1152 648,1142 683,1165 740,1170 770,1178 820,1200 850,1232 885,1280 920,1298 955,1332 985,1345 1010,1354 1040,1350 1090,1325 1150,1294 1210,1293 1290,1295 1340,1285 1370,1268 1426,1252 1450,1255 1480,1262 1510,1280 1574,1290 1650,1298 1700,1298 1755,1310 1795,1335 1818,1338",
];
const LABELS: [string, number, number, number][] = [
  ["West End", 942, 1068, 424],
  ["Downtown", 1060, 1207, 504],
  ["Strathcona", 1268, 1415, 498],
  ["Grandview-Woodland", 1350, 1648, 377],
  ["Hastings-Sunrise", 1587, 1810, 475],
  ["West Point Grey", 387, 607, 602],
  ["Kitsilano", 763, 868, 627],
  ["Fairview", 928, 1040, 645],
  ["Mount Pleasant", 1169, 1373, 640],
  ["South Cambie", 1010, 1200, 762],
  ["Riley Park", 1162, 1295, 861],
  ["Arbutus-Ridge", 717, 912, 855],
  ["Shaughnessy", 867, 1043, 937],
  ["Kensington-Cedar Cottage", 1348, 1707, 833],
  ["Renfrew-Collingwood", 1541, 1833, 873],
  ["Dunbar-Southlands", 373, 638, 1008],
  ["Kerrisdale", 725, 856, 1070],
  ["Oakridge", 992, 1120, 1065],
  ["Marpole", 965, 1075, 1255],
  ["Sunset", 1273, 1367, 1151],
  ["Victoria-Fraserview", 1434, 1690, 1149],
  ["Killarney", 1662, 1773, 1098],
];

/* Map label whose white halo is painted under the whole word */
function MapLabel({ t, a, b, y }: { t: string; a: number; b: number; y: number }) {
  const ref = useRef<SVGTextElement>(null);
  useLayoutEffect(() => {
    const el = ref.current;
    if (!el) return;
    el.style.letterSpacing = "0px";
    el.style.letterSpacing = `${(b - a - el.getComputedTextLength()) / t.length}px`;
  }, [t, a, b]);
  return (
    <text ref={ref} x={a} y={y}>
      {t}
    </text>
  );
}

function MapDrawing() {
  return (
    <svg viewBox="0 0 833 583" className="block h-[583px] w-[833px]">
      <g transform="translate(30 61) scale(.33333)" strokeLinejoin="round" strokeLinecap="round">
        <g fill="none" stroke="#1f78b4" strokeWidth="8.500">
          {SHORE_THICK.map((p, i) => (
            <polyline key={i} points={p} />
          ))}
        </g>
        <g fill="none" stroke="#1f78b4" strokeWidth="7">
          {SHORE_THIN.map((p, i) => (
            <polyline key={i} points={p} />
          ))}
        </g>
        {HOODS.map(([f, p], i) => (
          <polygon key={i} points={p} fill={f} stroke="#3b4a3b" strokeWidth="2.400" />
        ))}
        <g fill="none" stroke="#1f78b4" strokeOpacity=".75" strokeWidth="3.500">
          {SHORE_THIN.map((p, i) => (
            <polyline key={i} points={p} />
          ))}
        </g>
        <g fontFamily="'Noto Sans', sans-serif" fontSize="31" fill="#1a1a1a" stroke="#fff" strokeWidth="8" paintOrder="stroke">
          {LABELS.map(([t, a, b, y]) => (
            <MapLabel key={t} t={t} a={a} b={b} y={y} />
          ))}
        </g>
      </g>
    </svg>
  );
}

function HRuler() {
  const ticks = Array.from({ length: 77 }, (_, i) => -20 + i * 5);
  return (
    <svg viewBox="0 0 1099 24" className="block h-[24px] w-[1099px] shrink-0" fontFamily="'Noto Sans', sans-serif" fontSize="12.500">
      {ticks.map((t) => {
        const x = Math.round(90 + t * 2.773) + 0.5;
        const major = t % 20 === 0;
        return (
          <g key={t}>
            <path d={`M${x} ${major ? 0 : t % 10 === 0 ? 16 : 19}V24`} stroke="#333" />
            {major && (
              <text x={x + 1.500} y={14} fill="#444">
                {t}
              </text>
            )}
          </g>
        );
      })}
      <path d="M817.500 0v24" stroke="#f00" />
    </svg>
  );
}
function VRuler() {
  const ticks = Array.from({ length: 49 }, (_, i) => -15 + i * 5);
  return (
    <svg viewBox="0 0 24 669" className="block h-[669px] w-[24px] shrink-0" fontFamily="'Noto Sans', sans-serif" fontSize="12.500">
      {ticks.map((t) => {
        const y = Math.round(41.800 + t * 2.773) + 0.5;
        const major = t % 20 === 0;
        return (
          <g key={t}>
            <path d={`M${major ? 0 : t % 10 === 0 ? 16 : 19} ${y}H24`} stroke="#333" />
            {major && (
              <text transform={`translate(14.500 ${y + 3}) rotate(-90)`} textAnchor="end" fill="#444">
                {t}
              </text>
            )}
          </g>
        );
      })}
      <path d="M0 327.500h24" stroke="#f00" />
    </svg>
  );
}

function MapLegend() {
  const h = "absolute size-[11px] border border-[#3a8cc0] bg-white";
  return (
    <div className="absolute left-[758px] top-[98px] h-[243px] w-[191px] border border-dashed border-[#5a1040] bg-white text-[12px] leading-none">
      <div className="mt-[10px] flex h-[18px] items-center pl-[11px] pt-[2px]">
        <div className="mr-[11px] size-[7px] rounded-full border border-[#333] bg-[#6a9a6a]" />
        <T w={63}>vanDougFirs</T>
      </div>
      <div className="mt-[3px] flex h-[18px] items-center pl-[4px] pt-px">
        <T w={82}>vanHoodsCount</T>
      </div>
      {SWATCHES.map(([t, bg, , w]) => (
        <div key={t} className="flex h-[18px] items-center pl-[4px]">
          <div className={"h-[12px] w-[20px] border border-[#555] " + bg} />
          <T w={w} c="ml-[5px]">
            {t}
          </T>
        </div>
      ))}
      <div className="flex h-[18px] items-center pl-[4px] pt-px">
        <div className="h-[12px] w-[20px] border border-[#6b5a1e] bg-[#d3b33b]" />
        <T w={31} c="ml-[5px]">
          Count
        </T>
      </div>
      <div className="flex h-[18px] items-center pl-[11px] pt-px">
        <div className="mr-[11px] size-[7px] rounded-full border border-[#333] bg-[#ff9e17]" />
        <T w={63}>vanBigTrees</T>
      </div>
      <div className="flex h-[18px] items-center pl-[3px] pt-px">
        <div className="h-[3px] w-[22px] bg-[#1f78b4]" />
        <T w={67} c="ml-[4px]">
          vanShoreline
        </T>
      </div>
      <div className="flex h-[18px] items-center pl-[4px] pt-px">
        <div className="h-[12px] w-[20px] border border-[#555] bg-[#a57259]" />
        <T w={134} c="ml-[5px]">
          Vancouver Neighborhoods
        </T>
      </div>
      <div className={h + " -left-px -top-px"} />
      <div className={h + " left-[89px] -top-px"} />
      <div className={h + " -right-px -top-px"} />
      <div className={h + " -left-px top-[115px]"} />
      <div className={h + " -right-px top-[115px]"} />
      <div className={h + " -left-px -bottom-px"} />
      <div className="absolute -left-[3px] top-[191px] h-[23px] w-[173px] border-3 border-[#ed1c24]" />
    </div>
  );
}

/* ---------- right panels ---------- */
const DockButtons = () => (
  <div className="ml-auto flex gap-[2px] pr-[2px]">
    <svg viewBox="0 0 12 12" className="size-[12px]">
      <rect x=".5" y=".5" width="11" height="11" rx="2" fill="#eee" stroke="#666" />
      <path d="M5 2.500h4.500V7H5zM2.500 5H7v4.500H2.500z" fill="#eee" stroke="#555" />
    </svg>
    <svg viewBox="0 0 12 12" className="size-[12px]">
      <rect x=".5" y=".5" width="11" height="11" rx="2" fill="#eee" stroke="#666" />
      <path d="M3 3l6 6M9 3L3 9" stroke="#555" strokeWidth="2" />
    </svg>
  </div>
);
const TAB_ON = "z-10 -mb-px flex items-center justify-center rounded-t-xs border border-b-0 border-[#b0b0b0] bg-[#f6f6f6]";
const TAB_OFF = "flex items-center justify-center rounded-t-xs border border-b-0 border-l-0 border-[#b5b5b5] bg-[#dcdcdc]";

function RightPanels() {
  const btn = "flex h-[22px] w-[23px] items-center justify-center rounded-xs border bg-[#f3f3f3]";
  return (
    <div className="flex w-[390px] shrink-0 flex-col text-[14px] leading-none">
      <div className="flex h-[30px] shrink-0 items-end border-b border-[#b5b5b5] text-[12.500px]">
        <div className={TAB_ON + " h-[30px] w-[63px] pt-[3px]"}>
          <T w={33}>Items</T>
        </div>
        <div className={TAB_OFF + " h-[27px] w-[101px] pt-[4px]"}>
          <T w={72}>Undo History</T>
        </div>
      </div>
      <div className="flex h-[20px] shrink-0 items-center pl-[4px] text-[18px]">
        <T w={45} c="pt-px">
          Items
        </T>
        <DockButtons />
      </div>
      <div className="flex h-[165px] shrink-0 flex-col border border-[#b5b5b5] bg-white">
        <div className="flex h-[24px] shrink-0 items-center border-b border-[#b5b5b5] bg-linear-to-b from-[#fbfbfb] to-[#ebebeb] text-[12.500px]">
          <div className="flex h-full w-[42px] items-center border-r border-[#ccc] pl-[3px]">
            <I n="eyeh" c="size-[19px]" />
          </div>
          <div className="flex h-full w-[42px] items-center border-r border-[#ccc] pl-[3px] pt-px">
            <I n="lockg" c="size-[19px]" />
          </div>
          <T w={26} c="ml-[3px]">
            Item
          </T>
        </div>
        <div className="flex h-[22px] items-center pl-[3px]">
          <Check on />
          <div className="w-[25px]" />
          <Check />
          <I n="legendicon" c="size-[19px] ml-[26px]" />
          <T w={71} c="ml-[7px] font-bold">
            {"<Legend>"}
          </T>
        </div>
        <div className="flex h-[22px] items-center pl-[3px]">
          <Check on />
          <div className="w-[25px]" />
          <Check />
          <I n="mapbook" c="size-[19px] ml-[26px]" />
          <T w={42} c="ml-[6px]">
            Map 1
          </T>
        </div>
      </div>
      <div className="flex h-[8px] shrink-0 items-center justify-center">
        <HGrip />
      </div>
      <div className="flex h-[30px] shrink-0 items-end border-b border-[#b5b5b5] text-[12.500px]">
        <div className={TAB_OFF + " h-[27px] w-[68px] border-l pt-[4px]"}>
          <T w={37}>Layout</T>
        </div>
        <div className={TAB_ON + " relative -ml-px h-[30px] w-[119px] pt-[3px]"}>
          <T w={88}>Item Properties</T>
          <div className="absolute left-[7px] top-[3px] h-[25px] w-[101px] border-3 border-[#ed1c24]" />
        </div>
        <div className={TAB_OFF + " h-[27px] w-[67px] pt-[4px]"}>
          <T w={39}>Guides</T>
        </div>
      </div>
      <div className="flex h-[20px] shrink-0 items-center pl-[4px] text-[18px]">
        <T w={128} c="pt-px">
          Item Properties
        </T>
        <DockButtons />
      </div>
      <div className="flex h-[21px] shrink-0 items-center border-b border-[#b5b5b5] bg-[#c6c6c6] pl-[5px] pt-px text-[12.500px] font-bold">
        <T w={47}>Legend</T>
      </div>
      <div className="flex h-[400px] shrink-0 border-l border-b border-[#b5b5b5] text-[12.500px]">
        <div className="flex flex-1 flex-col overflow-hidden pr-[11px] pl-[12px]">
          <div className="h-[2px] shrink-0 border-b border-[#d0d0d0]" />
          <div className="flex h-[28px] shrink-0 items-center pl-[2px] pt-[4px] font-bold">
            <svg viewBox="0 0 11 8" className="h-[8px] w-[11px]">
              <path d="M0 0h11L5.500 8z" fill="#333" />
            </svg>
            <T w={89} c="ml-[8px]">
              Legend Items
            </T>
          </div>
          <div className="flex h-[420px] shrink-0 flex-col rounded-xs border border-[#d2d2d2] bg-[#ececec] pl-[12px] pr-[13px]">
            <div className="flex h-[41px] shrink-0 items-center pt-[5px]">
              <Check on />
              <T w={69} c="ml-[5px]">
                Auto update
              </T>
              <div className="ml-auto flex h-[23px] w-[74px] items-center justify-center rounded-xs border border-[#c4c4c4] bg-[#f5f5f5] text-[#808080]">
                <T w={58}>Update All</T>
              </div>
            </div>
            <div className="h-[249px] shrink-0 border border-[#b5b5b5] bg-white text-[14px]">
              <div className="flex h-[22px] items-center pl-[33px] pr-px">
                <div className="size-[11px] rounded-full border border-[#444] bg-[#6f9a6c]" />
                <T w={82} c="ml-[10px]">
                  vanDougFirs
                </T>
                <div className="ml-auto h-[18px] w-[4px] bg-[#e5e5e5]" />
              </div>
              <div className="flex h-[22px] items-center bg-[#f0f0f0] pl-[8px] pr-px">
                <Down />
                <I n="polyb" c="size-5 ml-[11px]" />
                <T w={107} c="ml-[6px]">
                  vanHoodsCount
                </T>
                <div className="ml-auto h-[18px] w-[4px] bg-[#e2e2e2]" />
              </div>
              {SWATCHES.map(([t, bg, w]) => (
                <div key={t} className="flex h-[22px] items-center pl-[53px]">
                  <div className={"size-[19px] border border-[#333]/80 " + bg} />
                  <T w={w} c="ml-[6px]">
                    {t}
                  </T>
                </div>
              ))}
              <div className="flex h-[22px] items-center pl-[28px] pr-px">
                <div className="size-[19px] border border-[#6b5a1e] bg-[#d3b33b]" />
                <T w={39} c="ml-[6px]">
                  Count
                </T>
                <div className="ml-auto h-[18px] w-[4px] bg-[#e5e5e5]" />
              </div>
              <div className="flex h-[22px] items-center pl-[33px] pr-px">
                <div className="size-[11px] rounded-full border border-[#444] bg-[#ff9e17]" />
                <T w={80} c="ml-[10px]">
                  vanBigTrees
                </T>
                <div className="ml-auto h-[18px] w-[4px] bg-[#e5e5e5]" />
              </div>
              <div className="flex h-[22px] items-center pl-[28px] pr-px">
                <div className="h-[5px] w-[19px] bg-[#1f78b4]" />
                <T w={85} c="ml-[6px]">
                  vanShoreline
                </T>
                <div className="ml-auto h-[18px] w-[4px] bg-[#e5e5e5]" />
              </div>
              <div className="flex h-[22px] items-center pl-[28px]">
                <div className="size-[19px] border border-[#4d3326] bg-[#a57259]" />
                <T w={177} c="ml-[6px]">
                  Vancouver Neighborhoods
                </T>
              </div>
            </div>
            <div className="mt-[6px] flex shrink-0 gap-[4px]">
              {["bdown", "bup", "bgroup", "bplus", "bminus", "bedit", "epsb", "bsum"].map((n) => (
                <div key={n} className={btn + (n === "epsb" ? " border-[#888]" : " border-[#c4c4c4]")}>
                  <I n={n} c="size-[15px]" />
                </div>
              ))}
              <div className={btn + " ml-auto -mr-[5px] border-[#c4c4c4]"}>
                <I n="epsg" c="size-[15px]" />
              </div>
              <div className="flex h-[22px] w-[16px] items-center justify-center rounded-xs border border-[#c4c4c4] bg-[#f3f3f3]">
                <Down c="text-[#999]" />
              </div>
            </div>
            <div className="mt-[10px] flex shrink-0 items-center">
              <Check />
              <T w={197} c="ml-[6px] pt-px">
                Only show items inside linked map
              </T>
            </div>
            <div className="mt-[11px] flex shrink-0 items-center">
              <Check />
              <T w={252} c="ml-[6px] pt-px">
                Only show items inside current atlas feature
              </T>
            </div>
          </div>
        </div>
        <div className="flex w-[18px] shrink-0 flex-col border-x border-[#b5b5b5] bg-[#e5e5e5]">
          <div className="flex h-[17px] items-center justify-center border-b border-[#b5b5b5] bg-[#f8f8f8]">
            <Up />
          </div>
          <div className="mt-[59px] h-[114px] border-y border-[#b5b5b5] bg-[#fcfcfc]" />
          <div className="mt-auto flex h-[17px] items-center justify-center border-t border-[#b5b5b5] bg-[#f8f8f8]">
            <Down />
          </div>
        </div>
      </div>
    </div>
  );
}

function ContextMenu() {
  const row = "flex h-[28px] items-center pl-[32px]";
  return (
    <div className="absolute left-[793px] top-[327px] z-20 h-[231px] w-[247px] border border-[#999] bg-white text-[15px] leading-none shadow-[4px_4px_4px_rgba(0,0,0,0.4)]">
      <div className={row + " -mt-px"}>
        <T w={122}>Undo Resize Items</T>
      </div>
      <div className={row + " text-[#808080]"}>
        <T w={34}>Redo</T>
      </div>
      <div className="mx-[5px] mb-px h-px bg-[#bbb]" />
      <div className={row}>
        <T w={34}>Copy</T>
      </div>
      <div className={row}>
        <T w={22}>Cut</T>
      </div>
      <div className="mx-[5px] mb-px h-px bg-[#bbb]" />
      <div className={row}>
        <T w={115}>Page Properties...</T>
      </div>
      <div className={row}>
        <T w={174}>Manage Guides for Page...</T>
      </div>
      <div className={row + " text-[#808080]"}>
        <T w={91}>Remove Page</T>
      </div>
      <div className="mx-[5px] h-px bg-[#bbb]" />
      <div className="-mx-px mt-px flex h-[30px] items-center border-3 border-[#ed1c24] bg-[#3399ff] pb-px pl-[30px] text-white">
        <T w={111}>Item Properties...</T>
      </div>
    </div>
  );
}

function LayoutWindow() {
  return (
    <div className="absolute left-[183px] top-[17px] flex h-[904px] w-[1582px] flex-col border-16 border-[#ed1c24] bg-[#618bd5]">
      <div className="flex h-[37px] shrink-0 items-start">
        <I n="qgis" c="size-[21px] ml-[9px] mt-[8px]" />
        <T w={122} c="ml-[683px] mt-[9px] text-[18.500px] leading-none text-[#222]">
          *Doug Fir Map
        </T>
        <div className="ml-auto mt-[17px] h-[2px] w-[14px] bg-[#222]" />
        <div className="ml-[19px] mt-[7px] h-[12px] w-[15px] border border-t-3 border-[#222]" />
        <div className="mr-[6px] ml-[10px] flex h-[26px] w-[58px] items-center justify-center bg-[#c75050]">
          <WX />
        </div>
      </div>
      <div className="mx-[7px] flex h-[826px] flex-col bg-[#f0f0f0] outline-1 outline-[#4a74bd]">
        <div className="flex h-[25px] shrink-0 items-center gap-[15px] border-b border-[#d7d7d7] pl-[11px] text-[15px] leading-none">
          <Menu w={44} t="Layout" />
          <Menu w={26} t="Edit" />
          <Menu w={32} t="View" />
          <Menu w={36} t="Items" />
          <Menu w={62} t="Add Item" />
          <T w={33}>Atlas</T>
          <T w={53}>Settings</T>
        </div>
        <div className={BAR + " h-[39px] gap-[9px] pl-[6px]"}>
          <Grip />
          <I n="save" c="size-6 -ml-px" />
          <Sep />
          {["newlayout", "duplayout", "manager", "open", "savetpl"].map((n, i) => (
            <I key={n} n={n} c={i === 0 ? "size-6 -ml-px" : "size-6"} />
          ))}
          <Sep />
          <I n="addpage" />
          <Sep />
          <I n="print" c="size-6 -ml-[2px]" />
          {["expimg", "expsvg", "exppdf", "undo", "redo"].map((n) => (
            <I key={n} n={n} />
          ))}
          <div className="ml-[5px] flex">
            <Grip />
          </div>
          <I n="atlas" c="size-6 -ml-px" />
          <I n="first" />
          <I n="prev" />
          <div className="-ml-[3px] flex h-[30px] w-[81px] items-center justify-between rounded-xs border border-[#aaa] bg-linear-to-r from-[#f0f0f0] to-[#fafafa] px-[4px] pr-[10px] text-[12.500px] text-[#777]">
            1<Down c="text-[#999]" />
          </div>
          <I n="next" c="size-6 -ml-[4px]" />
          {["last", "printg", "expatlas", "atlasset"].map((n) => (
            <I key={n} n={n} />
          ))}
        </div>
        <div className={BAR + " h-[38px] gap-[9px] pl-[6px]"}>
          <Grip />
          <I n="zoomin" c="size-6 -ml-px" />
          {["zoomout", "zoom11", "zoomfull", "refresh"].map((n) => (
            <I key={n} n={n} />
          ))}
          <div className="ml-[5px] flex">
            <Grip />
          </div>
          {["lock", "unlock", "group", "ungroup", "raise", "align", "distribute", "resize"].map((n) => (
            <I key={n} n={n} />
          ))}
        </div>
        <div className="flex h-[694px] shrink-0">
          <div className="flex w-[40px] shrink-0 flex-col items-center border-r border-[#b5b5b5] bg-linear-to-r from-[#fbfbfb] to-[#eeeeee] pt-[8px] pl-[2px]">
            <div className="mb-[4px] flex h-[2px]">
              <HGrip />
            </div>
            {["hand", "zoombox", "select", "move", "editnodes", "addmap", "add3d", "addpic", "addlabel", "addlegend", "addscale", "north", "addshape", "addarrow", "addnode", "addhtml", "addtable"].map((n) => (
              <div
                key={n}
                className={n === "select" ? "flex h-[32.100px] w-[32px] shrink-0 items-center justify-center rounded-sm border border-[#b0b0b0] bg-[#dedede]" : "flex h-[32.100px] w-[31px] shrink-0 items-center justify-center"}
              >
                <I n={n} c="size-[23px]" />
              </div>
            ))}
          </div>
          <div className="flex w-[1099px] shrink-0 flex-col border-b border-[#b5b5b5] pt-px">
            <HRuler />
            <div className="flex h-[669px]">
              <VRuler />
              <div className="relative h-[669px] w-[1075px] bg-[#d7d7d7]">
                <div className="absolute left-[128px] top-[50px] h-[583px] w-[825px] bg-[#969696]" />
                <div className="absolute left-[120px] top-[42px] h-[583px] w-[833px] bg-white">
                  <MapDrawing />
                </div>
                <div className="absolute left-0 top-0">
                  <MapLegend />
                </div>
                <ContextMenu />
              </div>
            </div>
          </div>
          <div className="w-[7px] shrink-0" />
          <div className="flex pt-px">
            <RightPanels />
          </div>
        </div>
        <div className="flex h-[30px] shrink-0 items-center pl-[7px] pt-[2px] text-[12.500px] leading-none">
          <T w={100} c="text-[14px]">
            1 item selected
          </T>
          <T w={88} c="ml-[855px]">
            x: 242.584 mm
          </T>
          <T w={87} c="ml-[19px]">
            y: 102.729 mm
          </T>
          <T w={44} c="ml-[19px]">
            page: 1
          </T>
          <div className="ml-[62px] flex h-[23px] w-[123px] items-center justify-between rounded-xs border border-[#aaa] bg-white pl-[3px] pr-[10px]">
            <T w={37}>58.7%</T>
            <Down />
          </div>
          <div className="relative ml-[8px] flex h-[6px] w-[98px] rounded-full border border-[#aaa] bg-[#ddd]">
            <div className="h-full w-[6px] rounded-l-full bg-[#4a9df0]" />
            <div className="absolute left-[3px] -top-[6px] h-[16px] w-[16px] rounded-xs border border-[#999] bg-white" />
          </div>
          <div className="ml-auto grid grid-cols-4 gap-[2px] self-end p-[3px]">
            {Array.from({ length: 16 }, (_, i) => (
              <div key={i} className={(i % 4) + Math.floor(i / 4) >= 3 ? "size-px bg-[#aaa]" : "size-px"} />
            ))}
          </div>
        </div>
      </div>
    </div>
  );
}

/* ---------- annotations ---------- */
function Annotations() {
  const heavy = "absolute font-['Liberation_Sans'] font-bold leading-none whitespace-nowrap";
  return (
    <>
      <div className="absolute left-[1142px] top-[359px] h-[81px] w-[172px] border-3 border-[#ed1c24]" />
      <div className={heavy + " left-[1151px] top-[365px] text-[31px] text-black [-webkit-text-stroke:1.8px_#000]"}>
        <T w={160}>UPDATED</T>
      </div>
      <div className={heavy + " left-[1151px] top-[407px] text-[31px] text-black [-webkit-text-stroke:1.8px_#000]"}>
        <T w={138}>LEGEND</T>
      </div>
      <svg viewBox="0 0 38 50" className="absolute left-[1162px] top-[440px] h-[50px] w-[38px]">
        <path d="M18.500 3L34.500 24H27v23.500H10.500V24H3z" fill="#ed1c24" stroke="#000" strokeWidth="3" />
      </svg>
      <div className="absolute left-[1348px] top-[428px] h-[363px] w-[354px] border-3 border-[#ed1c24]" />
      <svg viewBox="0 0 178 64" className="absolute left-[1620px] top-[741px] h-[64px] w-[178px]">
        <path d="M4 32L88 5v13h85v27H88v14z" fill="#ed1c24" stroke="#000" strokeWidth="8" strokeLinejoin="round" />
      </svg>
      <div className={heavy + " left-[1647px] top-[820px] text-[40px] text-black [-webkit-text-stroke:2.4px_#000]"}>
        <T w={245}>NEW TITLE</T>
      </div>
      <svg viewBox="0 0 84 114" className="absolute left-[65px] top-[902px] h-[114px] w-[84px]">
        <path d="M42.500 6L79 56H61v53H23V56H5z" fill="#ed1c24" stroke="#000" strokeWidth="8" strokeLinejoin="round" />
      </svg>
      <div className={heavy + " left-[158px] top-[944px] text-[40px] text-[#ed1c24] [-webkit-text-stroke:2.4px_#ed1c24]"}>
        <T w={221}>ORIGINAL</T>
      </div>
    </>
  );
}

export default function App() {
  return (
    <div className="relative h-[1025px] w-[1915px] overflow-hidden bg-[#f0f0f0] font-['Noto_Sans',sans-serif] text-black">
      <MainWindow />
      <LayoutWindow />
      <Annotations />
    </div>
  );
}
